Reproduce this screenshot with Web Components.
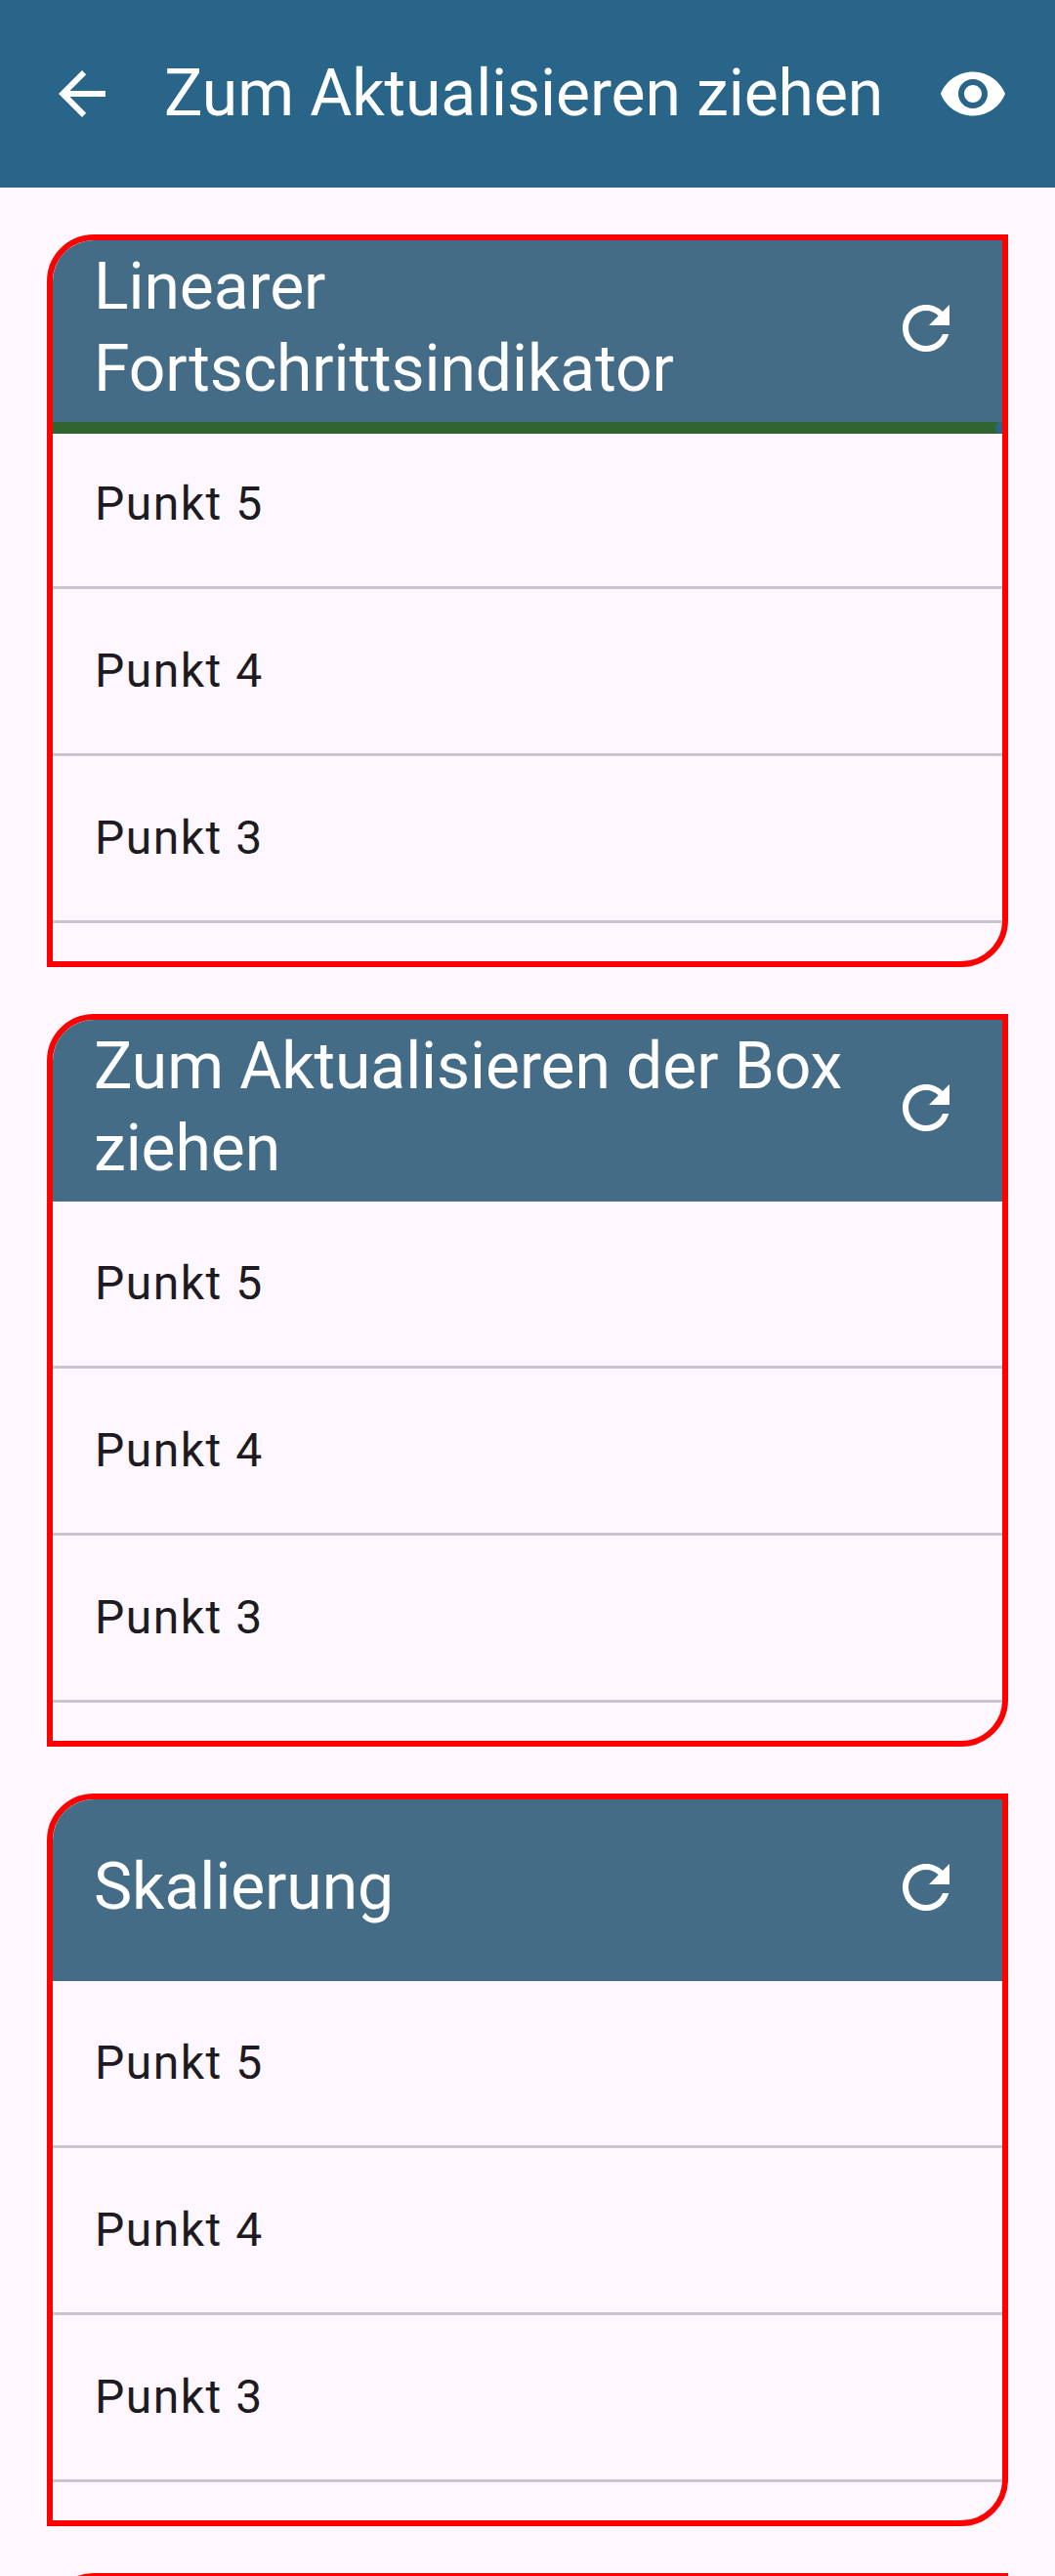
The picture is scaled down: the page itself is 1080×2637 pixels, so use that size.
<!DOCTYPE html>
<html lang="de">
<head>
<meta charset="utf-8">
<title>Zum Aktualisieren ziehen</title>
<style>
  html, body { margin: 0; background: #fef7ff; }
  body { font-family: Roboto, sans-serif; color: #1d1b20; }
</style>
</head>
<body>
<refresh-screen></refresh-screen>
<script>
const define = (name, html) => customElements.define(name, class extends HTMLElement {
  constructor() {
    super();
    this.attachShadow({ mode: 'open' }).innerHTML = html;
  }
});

const ICONS = {
  back: 'M20 11H7.83l5.59-5.59L12 4l-8 8 8 8 1.41-1.41L7.83 13H20v-2z',
  eye: 'M12 4.5C7 4.5 2.73 7.61 1 12c1.73 4.39 6 7.5 11 7.5s9.27-3.11 11-7.5c-1.73-4.39-6-7.5-11-7.5zM12 17c-2.76 0-5-2.24-5-5s2.24-5 5-5 5 2.24 5 5-2.24 5-5 5zm0-8c-1.66 0-3 1.34-3 3s1.34 3 3 3 3-1.34 3-3-1.34-3-3-3z',
  refresh: 'M17.65 6.35C16.2 4.9 14.21 4 12 4c-4.42 0-7.99 3.58-7.99 8s3.57 8 7.99 8c3.73 0 6.84-2.55 7.73-6h-2.08c-.82 2.33-3.04 4-5.65 4-3.31 0-6-2.69-6-6s2.69-6 6-6c1.66 0 3.14.69 4.22 1.78L13 11h7V4l-2.35 2.35z'
};

customElements.define('md-icon', class extends HTMLElement {
  connectedCallback() {
    const root = this.shadowRoot || this.attachShadow({ mode: 'open' });
    root.innerHTML = `<style>:host{display:block;flex:none;width:72px;height:72px}svg{display:block}</style>
      <svg width="72" height="72" viewBox="0 0 24 24" fill="#fff"><path d="${ICONS[this.getAttribute('name')]}"/></svg>`;
  }
});

define('app-bar', `
  <style>
    :host { display: flex; align-items: center; gap: 48px; height: 192px; padding: 0 48px; box-sizing: border-box; background: #296589; color: #fff; }
    h1 { margin: 0; flex: 1; font-size: 66px; line-height: 84px; font-weight: 400; letter-spacing: -0.09px; white-space: nowrap; }
  </style>
  <md-icon name="back"></md-icon><h1><slot></slot></h1><md-icon name="eye"></md-icon>`);

define('list-row', `
  <style>
    :host { display: flex; align-items: center; height: 168px; padding: 0 42px 0 43px; border-bottom: 3px solid #cac4d0; font-size: 48px; line-height: 72px; letter-spacing: 1.5px; }
  </style>
  <slot></slot>`);

define('linear-progress', `
  <style>
    :host { display: flex; justify-content: flex-end; height: 12px; margin-bottom: -12px; position: relative; background: #31652f; }
    i { width: 12px; height: 12px; margin-right: -5px; border-radius: 6px; background: #296589; }
  </style>
  <i></i>`);

define('refresh-card', `
  <style>
    :host { display: block; flex: none; box-sizing: border-box; height: 750px; border: 6px solid #f00; border-radius: 48px 0; overflow: hidden; background: #fef7ff; }
    header { display: flex; align-items: center; height: 186px; padding: 0 42px; background: #446c86; color: #fff; box-sizing: border-box; }
    h2 { margin: -6px 0 0; flex: 1; font-size: 66px; line-height: 84px; font-weight: 400; letter-spacing: -0.09px; }
    md-icon { margin-top: -6px; }
  </style>
  <header><h2><slot name="title"></slot></h2><md-icon name="refresh"></md-icon></header>
  <slot></slot>`);

define('refresh-screen', `
  <style>
    :host { display: flex; flex-direction: column; height: 2637px; overflow: hidden; }
    app-bar { flex: none; }
    main { display: flex; flex-direction: column; gap: 48px; padding: 48px 48px 0; flex: 1; min-height: 0; overflow: hidden; }
  </style>
  <app-bar>Zum Aktualisieren ziehen</app-bar>
  <main>
    <refresh-card><span slot="title">Linearer Fortschrittsindikator</span>
      <linear-progress></linear-progress>
      <list-row>Punkt 5</list-row><list-row>Punkt 4</list-row><list-row>Punkt 3</list-row></refresh-card>
    <refresh-card><span slot="title">Zum Aktualisieren der Box ziehen</span>
      <list-row>Punkt 5</list-row><list-row>Punkt 4</list-row><list-row>Punkt 3</list-row></refresh-card>
    <refresh-card><span slot="title">Skalierung</span>
      <list-row>Punkt 5</list-row><list-row>Punkt 4</list-row><list-row>Punkt 3</list-row></refresh-card>
    <refresh-card></refresh-card>
  </main>`);
</script>
</body>
</html>
